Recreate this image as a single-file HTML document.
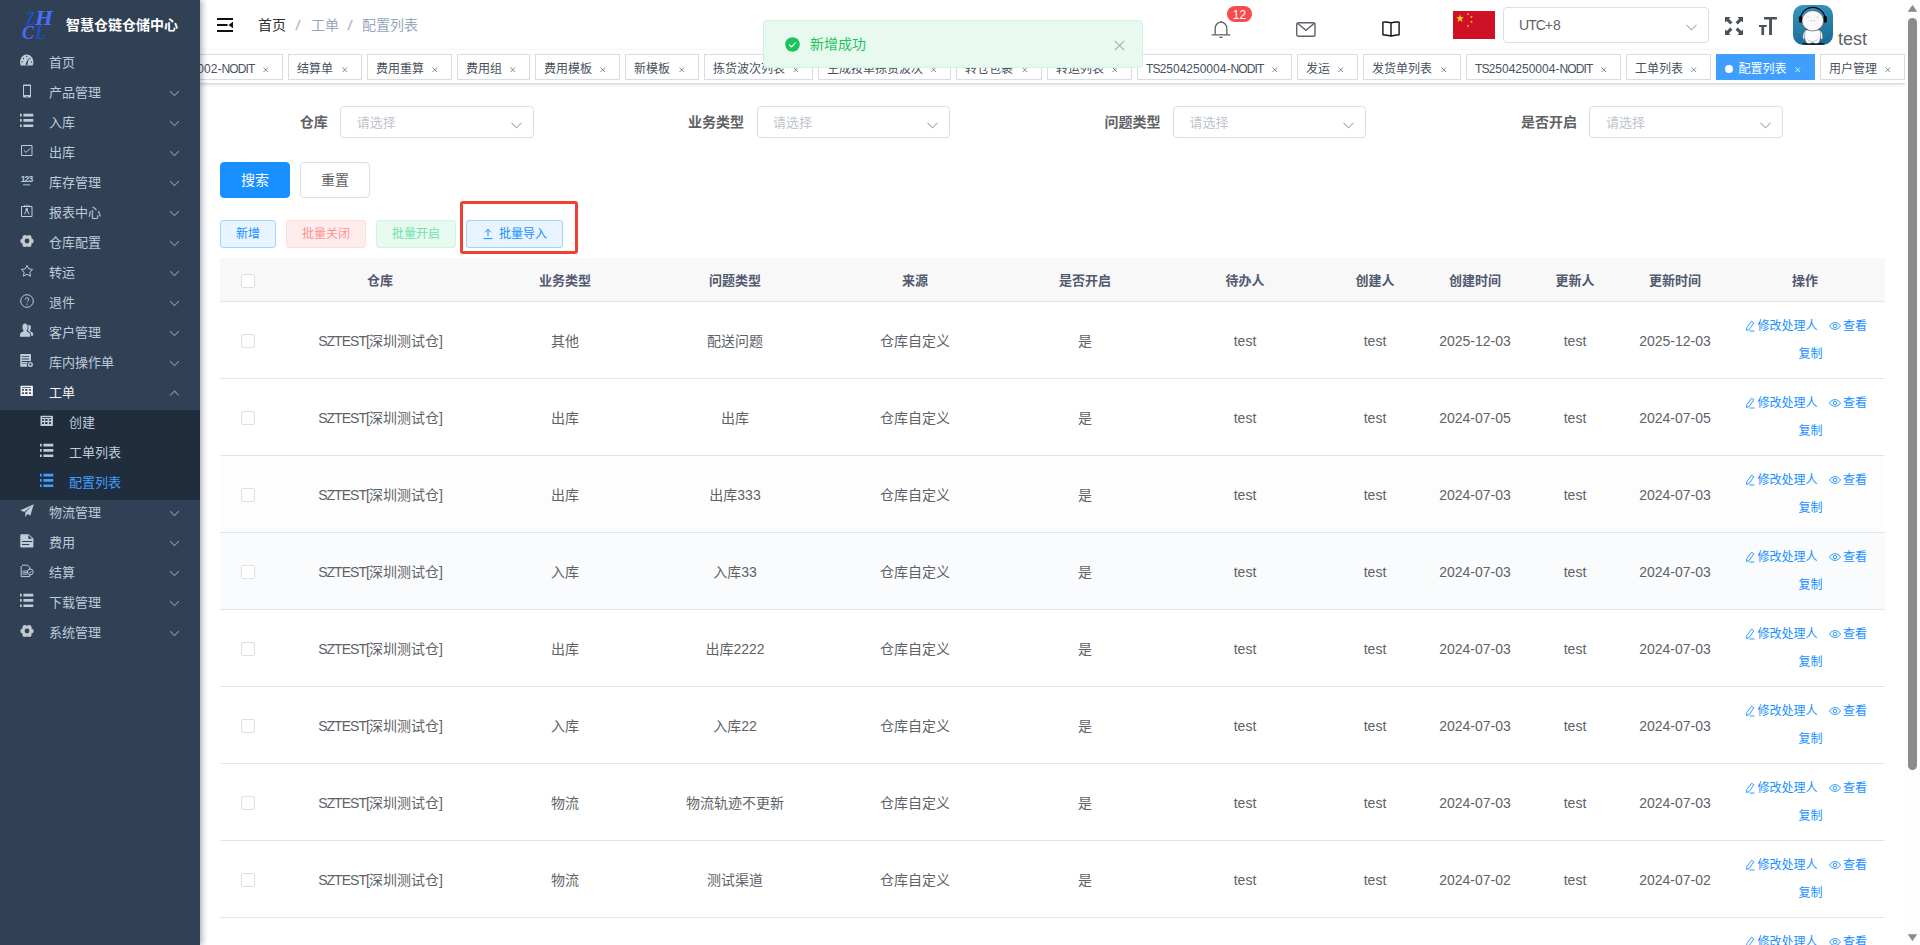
<!DOCTYPE html><html lang="zh-CN"><head><meta charset="utf-8"><title>配置列表</title><style>
*{box-sizing:border-box;margin:0;padding:0}
html,body{width:1920px;height:945px;overflow:hidden;background:#fff}
body{font-family:"Liberation Sans","Noto Sans CJK SC",sans-serif;font-size:14px;color:#606266;position:relative}
.abs{position:absolute}
#sb{position:absolute;left:0;top:0;width:200px;height:945px;background:#304156;z-index:20;box-shadow:2px 0 6px rgba(0,21,41,.35)}
#sub{position:absolute;left:0;top:410px;width:200px;height:90px;background:#1f2d3d}
.mi{position:absolute;left:0;width:200px;height:30px;color:#bfcbd9;font-size:13px;line-height:24px;white-space:nowrap}
.mi .tx{position:absolute;left:49px;top:1px}
.mi svg.ic{position:absolute;left:20px;top:4px;width:14px;height:14px;fill:currentColor;overflow:visible}
.mi.s .tx{left:69px}
.mi.s svg.ic{left:40px}
.mi svg.ar{position:absolute;left:168.500px;top:10px;width:11px;height:6.600px;fill:none;stroke:#8896a8;stroke-width:.95}
#nav{position:absolute;left:200px;top:0;width:1705px;height:50px;background:#fff}
#tags{position:absolute;left:200px;top:50px;width:1705px;height:34px;background:#fff;border-bottom:1px solid #d8dce5;box-shadow:0 1px 3px 0 rgba(0,0,0,.12),0 0 3px 0 rgba(0,0,0,.04);overflow:hidden}
.tag{position:absolute;top:4px;height:26px;border:1px solid #d8dce5;background:#fff;color:#495060;font-size:12px;line-height:28px;padding-left:8px;white-space:nowrap}
.cp{letter-spacing:-.07em}
.tag svg.x{position:absolute;right:13.500px;top:11.500px;width:5.500px;height:5.500px;stroke:#6b7280;stroke-width:.9;fill:none}
.tag.on{background:#409eff;border-color:#409eff;color:#fff}
.tag.on svg.x{stroke:#fff}
.tag.on i{display:inline-block;width:8px;height:8px;border-radius:50%;background:#fff;margin-right:5.500px;position:relative;top:0}
.lbl{position:absolute;top:106px;height:32px;line-height:32px;font-weight:700;font-size:14px;color:#606266;text-align:right;width:120px}
.sel{position:absolute;top:106px;height:32px;width:193.400px;border:1px solid #dcdfe6;border-radius:4px;background:#fff;font-size:13px;line-height:31px;color:#c0c4cc;padding-left:15.500px}
.sel svg,.tz svg{position:absolute;right:11px;top:14.500px;width:11px;height:7px;fill:none;stroke:#a8abb2;stroke-width:1.1}
.btn{position:absolute;text-align:center;border-radius:4px;border:1px solid;white-space:nowrap}
.th{position:absolute;top:0;height:43px;line-height:45px;text-align:center;font-weight:700;font-size:13px;color:#515a6e}
.row{position:absolute;left:220px;width:1665px;height:77px;border-bottom:1px solid #dfe6ec}
.c{position:absolute;top:0;height:76px;line-height:79px;text-align:center;font-size:14px;color:#606266;white-space:nowrap}
.cb{position:absolute;left:21px;width:14px;height:14px;border:1px solid #dcdfe6;border-radius:2px;background:#fff}
.lk{position:absolute;font-size:12px;line-height:16px;color:#1890ff;white-space:nowrap}
.lk svg{position:absolute;left:-14px;top:2px;width:12px;height:12px}
</style></head><body>
<div id="sb">
<div class="abs" style="left:21px;top:3px;width:40px;height:40px;font-family:'Liberation Serif',serif;font-style:italic;font-weight:700;line-height:1"><span class="abs" style="left:4.500px;top:6px;font-size:19px;color:#1f4fc0;transform:scaleX(.78);transform-origin:0 0">Z</span><span class="abs" style="left:13.500px;top:5px;font-size:21px;color:#4a6cff;transform:scaleX(1.1);transform-origin:0 0">H</span><span class="abs" style="left:1px;top:21px;font-size:18px;color:#4a6cff">C</span><span class="abs" style="left:14px;top:21px;font-size:18px;color:#1f4fc0">L</span></div>
<div class="abs" style="left:66px;top:13px;font-size:14px;font-weight:700;color:#fff;line-height:24px;white-space:nowrap">智慧仓链仓储中心</div>
<div id="sub"></div>
<div class="mi" style="top:50px;"><svg class="ic" viewBox="0 0 14 14"><path transform="translate(0,-1.700) scale(.96,1.090)" d="M7 2a7 7 0 0 0-7 7c0 1.1.3 2.2.8 3.1h12.4c.5-.9.8-2 .8-3.1a7 7 0 0 0-7-7zm0 1.2a.7.7 0 1 1 0 1.4.7.7 0 0 1 0-1.4zM2.2 9.7a.7.7 0 1 1 0-1.4.7.7 0 0 1 0 1.4zm1.4-3.4a.7.7 0 1 1 0-1.4.7.7 0 0 1 0 1.4zm4.3 4.300a1 1 0 1 1-1.7-.6L8.600 5.600l.6.3-1.3 4.7zM10.400 6.300a.7.7 0 1 1 0-1.4.7.7 0 0 1 0 1.4zm1.400 3.400a.7.7 0 1 1 0-1.4.7.7 0 0 1 0 1.4z"/></svg><span class="tx">首页</span></div>
<div class="mi" style="top:80px;"><svg class="ic" viewBox="0 0 14 14"><path d="M3.800 0.500h6.400c.5 0 .8.300.8.800v11.400c0 .5-.3.800-.8.800H3.800c-.5 0-.8-.3-.8-.8V1.300c0-.5.3-.8.8-.8zm.2 1.500v9h6V2H4zm2.300 10v.7h1.400V12H6.300z" fill-rule="evenodd"/></svg><span class="tx">产品管理</span><svg class="ar" viewBox="0 0 10 6"><path d="M1 1l4 4 4-4"/></svg></div>
<div class="mi" style="top:110px;"><svg class="ic" viewBox="0 0 14 14"><path d="M0 -.3h1.700v2.700H0zM3.400 -.3H13.300v2.700H3.400zM0 5h1.700v2.700H0zM3.400 5H13.300v2.700H3.400zM0 10.400h1.700v2.700H0zM3.400 10.400H13.300v2.700H3.400z"/></svg><span class="tx">入库</span><svg class="ar" viewBox="0 0 10 6"><path d="M1 1l4 4 4-4"/></svg></div>
<div class="mi" style="top:140px;"><svg class="ic" viewBox="0 0 14 14"><path d="M1.500 1.500h10.500v10h-10.500z" fill="none" stroke="currentColor" stroke-width="1" stroke-linejoin="round"/><path d="M3.800 6.200l2.400 2.300 4-4.200" fill="none" stroke="currentColor" stroke-width="1"/></svg><span class="tx">出库</span><svg class="ar" viewBox="0 0 10 6"><path d="M1 1l4 4 4-4"/></svg></div>
<div class="mi" style="top:170px;"><svg class="ic" viewBox="0 0 14 14"><text x="6.500" y="7.600" font-size="8.500" font-weight="700" text-anchor="middle" font-family="Liberation Sans,sans-serif" letter-spacing="-0.9" transform="scale(1,1.050)">123</text><path d="M3 10.400h7.300v.9h-7.300z"/></svg><span class="tx">库存管理</span><svg class="ar" viewBox="0 0 10 6"><path d="M1 1l4 4 4-4"/></svg></div>
<div class="mi" style="top:200px;"><svg class="ic" viewBox="0 0 14 14"><path d="M1.500 2.500h10.500v10h-10.500z" fill="none" stroke="currentColor" stroke-width="1"/><path d="M4.600 1v2.200M6.800 .6v2.200M9 1v2.200M6.800 5.500L4.500 10.300M6.800 5.500L9.100 10.300" fill="none" stroke="currentColor" stroke-width="1"/><circle cx="6.800" cy="5.300" r="1.200"/></svg><span class="tx">报表中心</span><svg class="ar" viewBox="0 0 10 6"><path d="M1 1l4 4 4-4"/></svg></div>
<div class="mi" style="top:230px;"><svg class="ic" viewBox="0 0 14 14"><g fill="#c6c9cc"><circle cx="11.10" cy="7.00" r="2.500"/><circle cx="9.05" cy="10.55" r="2.500"/><circle cx="4.95" cy="10.55" r="2.500"/><circle cx="2.90" cy="7.00" r="2.500"/><circle cx="4.95" cy="3.45" r="2.500"/><circle cx="9.05" cy="3.45" r="2.500"/><circle cx="7" cy="7" r="4.800"/></g><circle cx="7" cy="7" r="2.400" fill="#304156"/></svg><span class="tx">仓库配置</span><svg class="ar" viewBox="0 0 10 6"><path d="M1 1l4 4 4-4"/></svg></div>
<div class="mi" style="top:260px;"><svg class="ic" viewBox="0 0 14 14"><path d="M7 1.300l1.750 3.600 3.950.55-2.850 2.800.68 3.950L7 10.300l-3.530 1.900.68-3.950L1.300 5.450l3.950-.55z" fill="none" stroke="currentColor" stroke-width="1" stroke-linejoin="round"/></svg><span class="tx">转运</span><svg class="ar" viewBox="0 0 10 6"><path d="M1 1l4 4 4-4"/></svg></div>
<div class="mi" style="top:290px;"><svg class="ic" viewBox="0 0 14 14"><circle cx="7" cy="7" r="6.300" fill="none" stroke="currentColor" stroke-width="1"/><path d="M5.200 5.600a1.800 1.800 0 1 1 2.600 1.600c-.5.300-.8.600-.8 1.200" fill="none" stroke="currentColor" stroke-width="1"/><circle cx="7" cy="10.200" r=".65"/></svg><span class="tx">退件</span><svg class="ar" viewBox="0 0 10 6"><path d="M1 1l4 4 4-4"/></svg></div>
<div class="mi" style="top:320px;"><svg class="ic" viewBox="0 0 14 14"><g transform="translate(0,-1.300) scale(.94,1.140)"><path d="M5.300 0.800c1.700 0 2.900 1.300 2.900 3.100 0 1.200-.5 2.400-1.300 3 .2.700.8.900 2 1.400 1.300.5 1.900 1.100 1.900 2.300v1.700H0v-1.700c0-1.200.6-1.800 1.900-2.300 1.200-.5 1.800-.7 2-1.400-.8-.6-1.300-1.800-1.300-3C2.600 2.100 3.600.8 5.300.8z"/><path d="M9.300 1.900c1.400 0 2.300 1 2.300 2.500 0 1-.4 1.900-1 2.400.1.600.6.800 1.600 1.200 1.100.4 1.800 1 1.800 2v1.500h-2.300v-1c0-1.300-.7-2.200-2.200-2.800-.6-.2-1-.4-1.300-.6.500-.8.800-1.800.8-2.800 0-.7-.1-1.300-.4-1.900.2-.3.500-.5.700-.5z"/></svg><span class="tx">客户管理</span><svg class="ar" viewBox="0 0 10 6"><path d="M1 1l4 4 4-4"/></svg></div>
<div class="mi" style="top:350px;"><svg class="ic" viewBox="0 0 14 14"><path d="M.8 0h9.700q.5 0 .5.500V12.200q0 .5-.5.500H.8q-.5 0-.5-.5V.5q0-.5.5-.5zM1.7 2.2H9V3.1H1.7zM1.7 4.6H9V5.5H1.7zM1.7 7H9V7.9H1.7zM1.7 9.4H6.5V10.1H1.7z" fill-rule="evenodd"/><circle cx="10.400" cy="10.400" r="3.500" fill="#304156"/><circle cx="10.400" cy="10.400" r="2.500"/><circle cx="10.400" cy="10.400" r="1.100" fill="#304156"/></svg><span class="tx">库内操作单</span><svg class="ar" viewBox="0 0 10 6"><path d="M1 1l4 4 4-4"/></svg></div>
<div class="mi" style="top:380px;color:#f4f4f5"><svg class="ic" viewBox="0 0 14 14"><path d="M1.100 1.700H12.300Q12.900 1.700 12.900 2.300V11.500Q12.900 12.100 12.300 12.100H1.100Q.500 12.100 .500 11.500V2.300Q.500 1.700 1.100 1.700zM2.05 3.25H10.9V3.95H2.05zM2.1 5.1H3.9V6.8H2.1zM5.1 5.1H7.5V6.8H5.1zM9.1 5.1H10.9V6.8H9.1zM2.1 8.2H3.9V9.9H2.1zM5.1 8.2H7.5V9.9H5.1zM9.1 8.2H10.9V9.9H9.1z" fill-rule="evenodd"/></svg><span class="tx">工单</span><svg class="ar" viewBox="0 0 10 6"><path d="M1 5l4-4 4 4"/></svg></div>
<div class="mi s" style="top:410px;"><svg class="ic" viewBox="0 0 14 14"><path d="M1.100 1.700H12.300Q12.900 1.700 12.900 2.300V11.500Q12.900 12.100 12.300 12.100H1.100Q.500 12.100 .500 11.500V2.300Q.500 1.700 1.100 1.700zM2.05 3.25H10.9V3.95H2.05zM2.1 5.1H3.9V6.8H2.1zM5.1 5.1H7.5V6.8H5.1zM9.1 5.1H10.9V6.8H9.1zM2.1 8.2H3.9V9.9H2.1zM5.1 8.2H7.5V9.9H5.1zM9.1 8.2H10.9V9.9H9.1z" fill-rule="evenodd"/></svg><span class="tx">创建</span></div>
<div class="mi s" style="top:440px;"><svg class="ic" viewBox="0 0 14 14"><path d="M0 -.3h1.700v2.700H0zM3.400 -.3H13.300v2.700H3.400zM0 5h1.700v2.700H0zM3.400 5H13.300v2.700H3.400zM0 10.400h1.700v2.700H0zM3.400 10.400H13.300v2.700H3.400z"/></svg><span class="tx">工单列表</span></div>
<div class="mi s" style="top:470px;color:#409eff"><svg class="ic" viewBox="0 0 14 14"><path d="M0 -.3h1.700v2.700H0zM3.400 -.3H13.300v2.700H3.400zM0 5h1.700v2.700H0zM3.400 5H13.300v2.700H3.400zM0 10.400h1.700v2.700H0zM3.400 10.400H13.300v2.700H3.400z"/></svg><span class="tx">配置列表</span></div>
<div class="mi" style="top:500px;"><svg class="ic" viewBox="0 0 14 14"><path d="M13.800.3L.3 6.300l3.900 1.600L11.500 2.300 5.300 8.600v4.300l2.200-2.900 2.900 1.600z"/></svg><span class="tx">物流管理</span><svg class="ar" viewBox="0 0 10 6"><path d="M1 1l4 4 4-4"/></svg></div>
<div class="mi" style="top:530px;"><svg class="ic" viewBox="0 0 14 14"><path d="M1.300.300h7.400l4.700 4.200v8c0 .6-.4 1-1 1H1.300c-.6 0-1-.4-1-1v-11.200c0-.6.4-1 1-1zM8.300 1.100v3.600h4zM2 7.100v1h10.200v-1H2zm0 3v1h7.200v-1H2z" fill-rule="evenodd"/></svg><span class="tx">费用</span><svg class="ar" viewBox="0 0 10 6"><path d="M1 1l4 4 4-4"/></svg></div>
<div class="mi" style="top:560px;"><svg class="ic" viewBox="0 0 14 14"><path d="M2 1.200h5.500l2.300 2.200v2.300M9.800 10v2.600H1.200V2" fill="none" stroke="currentColor" stroke-width="1"/><path d="M2.500 7h4.500M2.500 8.600h4.500M2.500 10.200h4.500" fill="none" stroke="currentColor" stroke-width=".9"/><circle cx="10.300" cy="7.900" r="2.900" fill="none" stroke="currentColor" stroke-width="1"/><path d="M9 7.900l1 1 1.600-1.900" fill="none" stroke="currentColor" stroke-width=".9"/></svg><span class="tx">结算</span><svg class="ar" viewBox="0 0 10 6"><path d="M1 1l4 4 4-4"/></svg></div>
<div class="mi" style="top:590px;"><svg class="ic" viewBox="0 0 14 14"><path d="M0 -.3h1.700v2.700H0zM3.400 -.3H13.300v2.700H3.400zM0 5h1.700v2.700H0zM3.400 5H13.300v2.700H3.400zM0 10.400h1.700v2.700H0zM3.400 10.400H13.300v2.700H3.400z"/></svg><span class="tx">下载管理</span><svg class="ar" viewBox="0 0 10 6"><path d="M1 1l4 4 4-4"/></svg></div>
<div class="mi" style="top:620px;"><svg class="ic" viewBox="0 0 14 14"><g fill="#c6c9cc"><circle cx="11.10" cy="7.00" r="2.500"/><circle cx="9.05" cy="10.55" r="2.500"/><circle cx="4.95" cy="10.55" r="2.500"/><circle cx="2.90" cy="7.00" r="2.500"/><circle cx="4.95" cy="3.45" r="2.500"/><circle cx="9.05" cy="3.45" r="2.500"/><circle cx="7" cy="7" r="4.800"/></g><circle cx="7" cy="7" r="2.400" fill="#304156"/></svg><span class="tx">系统管理</span><svg class="ar" viewBox="0 0 10 6"><path d="M1 1l4 4 4-4"/></svg></div>
</div>
<div id="nav">
<svg class="abs" style="left:17px;top:18px;width:16px;height:14px" viewBox="0 0 16 14"><path d="M0 0h16v2H0zM0 6h10.500v2H0zM0 12h16v2H0zM16 3.800v6.400L11.500 7z" fill="#111"/></svg>
<div class="abs" style="left:58px;top:13px;font-size:14px;line-height:24px;white-space:nowrap;color:#97a8be"><span style="color:#303133">首页</span><span class="abs" style="left:37.500px;color:#b8c0cc;font-weight:700;transform:skewX(-12deg)">/</span><span class="abs" style="left:53px">工单</span><span class="abs" style="left:90px;color:#b8c0cc;font-weight:700;transform:skewX(-12deg)">/</span><span class="abs" style="left:104px">配置列表</span></div>
<svg class="abs" style="left:1011px;top:20px;width:20px;height:19px" viewBox="0 0 20 19"><path d="M4.200 14.800V8.300c0-3.500 2.500-6.100 5.800-6.100s5.800 2.600 5.800 6.100v6.500" fill="none" stroke="#5d6169" stroke-width="1.300"/><path d="M1.200 14.900h17.600" stroke="#5d6169" stroke-width="1.300" stroke-linecap="round"/><path d="M8.800 17.400h2.400" stroke="#5d6169" stroke-width="1.100" stroke-linecap="round"/><circle cx="10" cy="1.700" r=".8" fill="#5d6169"/></svg>
<div class="abs" style="left:1027px;top:6px;width:25px;height:16px;border-radius:8px;background:#f74c4f;color:#fff;font-size:12px;line-height:19px;text-align:center">12</div>
<svg class="abs" style="left:1096px;top:22px;width:20px;height:15px" viewBox="0 0 20 15"><rect x=".7" y=".7" width="18.300" height="13.600" rx="1.800" fill="none" stroke="#5d6169" stroke-width="1.400"/><path d="M1.500 1.200l8.400 7.200 8.400-7.200" fill="none" stroke="#5d6169" stroke-width="1.400"/></svg>
<svg class="abs" style="left:1182px;top:21px;width:18px;height:16px" viewBox="0 0 18 16"><path d="M.9 1.100Q5 .600 9 1.900 13 .600 17.100 1.100V13.700Q13 13.800 9 15.100 5 13.800.9 13.700zM9 1.900V15.100" fill="none" stroke="#111" stroke-width="1.400" stroke-linejoin="round"/></svg>
<svg class="abs" style="left:1253px;top:11px;width:42px;height:28px" viewBox="0 0 42 28"><rect width="42" height="28" fill="#ce1126"/><g fill="#fcd116"><path d="M7.00 3.40L7.99 6.24L10.99 6.30L8.60 8.12L9.47 11.00L7.00 9.28L4.53 11.00L5.40 8.12L3.01 6.30L6.01 6.24z"/><path d="M15.65 1.70L15.45 2.76L16.37 3.31L15.30 3.45L15.06 4.49L14.60 3.52L13.53 3.61L14.31 2.88L13.90 1.89L14.84 2.40z"/><path d="M18.76 4.42L18.93 5.48L19.99 5.69L19.03 6.18L19.16 7.25L18.40 6.49L17.42 6.94L17.91 5.98L17.18 5.20L18.24 5.36z"/><path d="M18.24 9.52L18.76 10.46L19.82 10.30L19.09 11.08L19.58 12.04L18.60 11.59L17.84 12.35L17.97 11.28L17.01 10.79L18.07 10.58z"/><path d="M14.15 13.60L14.96 14.30L15.90 13.79L15.49 14.78L16.27 15.51L15.20 15.42L14.74 16.39L14.50 15.35L13.43 15.21L14.35 14.66z"/></g></svg>
<div class="abs tz" style="left:1303px;top:7px;width:206px;height:36px;border:1px solid #dcdfe6;border-radius:4px;font-size:14px;line-height:34px;padding-left:15px;color:#606266"><span class="cp">UTC</span>+8<svg viewBox="0 0 11 7" style="top:16px;right:11px"><path d="M.5.800l5 5 5-5"/></svg></div>
<svg class="abs" style="left:1525px;top:17px;width:18px;height:18px" viewBox="0 0 18 18" fill="#4a505c"><path d="M0 0h5.600L3.900 1.700l3.500 3.500-2.200 2.200-3.500-3.500L0 5.600zM18 0v5.600l-1.700-1.700-3.500 3.500-2.200-2.200 3.500-3.500L12.400 0zM0 18v-5.600l1.700 1.700 3.500-3.500 2.200 2.200-3.500 3.500L5.600 18zM18 18h-5.600l1.700-1.700-3.500-3.500 2.200-2.200 3.500 3.500L18 12.400z"/></svg>
<svg class="abs" style="left:1559px;top:17px;width:18px;height:18px" viewBox="0 0 18 18" fill="#4a505c"><path d="M5.100 0h12.800v2.600H13V18h-2.900V2.600H5.100zM0 7.900h7.700V10H5.100v8H2.400v-8H0z"/></svg>
<svg class="abs" style="left:1593px;top:5px;width:40px;height:40px" viewBox="0 0 40 40"><defs><linearGradient id="ag" x1="0" y1="0" x2="0.200" y2="1"><stop offset="0" stop-color="#3896bf"/><stop offset="1" stop-color="#1a6f99"/></linearGradient></defs><rect width="40" height="40" rx="10" fill="url(#ag)"/><ellipse cx="20.500" cy="38.700" rx="11.500" ry="1.100" fill="#06141c"/><path d="M7.200 15.500a12.600 13.200 0 0 1 25.200 0" fill="none" stroke="#0a0a0a" stroke-width="1.300"/><rect x="5.800" y="11" width="3.600" height="6.800" rx="1.700" fill="#0a0a0a"/><rect x="30.300" y="11" width="3.600" height="6.800" rx="1.700" fill="#0a0a0a"/><path d="M12 25.500c-1.800 1.500-2.600 5.500-2 8.200.3 1 1.500 1 1.900 0l1.600-6zM27.600 25.500c1.800 1.500 2.600 5.500 2 8.200-.3 1-1.500 1-1.900 0l-1.600-6z" fill="#fafafa" stroke="#333" stroke-width=".4"/><path d="M12.300 25c-1 4.500-.8 9 .6 12.500 1.600 1.300 4.700 1.400 6.700.3 2 1.100 5.100 1 6.700-.3 1.400-3.500 1.600-8 .6-12.500z" fill="#fcfcfc" stroke="#333" stroke-width=".4"/><ellipse cx="19.800" cy="15.800" rx="10.800" ry="10.200" fill="#f9f9f9" stroke="#222" stroke-width=".5"/><path d="M13.300 12.600q1.500-1.500 3.200 0M22.600 12.600q1.500-1.500 3.200 0" stroke="#aaa" stroke-width=".5" fill="none"/><path d="M17.300 15.600h1.700M20.300 15.600h1.700" stroke="#999" stroke-width=".6"/><path d="M14.500 34.300c1.500 1.500 3.500 2 5.100 2.300 1.600-.3 3.600-.8 5.100-2.300M19.600 36.600v1.500" stroke="#777" stroke-width=".4" fill="none"/></svg>
<div class="abs" style="left:1638px;top:27px;font-size:18px;line-height:24px;color:#606266">test</div>
</div>
<div id="tags">
<div class="tag" style="left:-72px;width:155px"><span class="cp">TS</span>2504250002-<span class="cp">NODIT</span><svg class="x" viewBox="0 0 6 6"><path d="M.5.500l5 5M5.500.5l-5 5"/></svg></div>
<div class="tag" style="left:88px;width:74px">结算单<svg class="x" viewBox="0 0 6 6"><path d="M.5.500l5 5M5.500.5l-5 5"/></svg></div>
<div class="tag" style="left:167px;width:85px">费用重算<svg class="x" viewBox="0 0 6 6"><path d="M.5.500l5 5M5.500.5l-5 5"/></svg></div>
<div class="tag" style="left:257px;width:73px">费用组<svg class="x" viewBox="0 0 6 6"><path d="M.5.500l5 5M5.500.5l-5 5"/></svg></div>
<div class="tag" style="left:335px;width:85px">费用模板<svg class="x" viewBox="0 0 6 6"><path d="M.5.500l5 5M5.500.5l-5 5"/></svg></div>
<div class="tag" style="left:425px;width:74px">新模板<svg class="x" viewBox="0 0 6 6"><path d="M.5.500l5 5M5.500.5l-5 5"/></svg></div>
<div class="tag" style="left:504px;width:109px">拣货波次列表<svg class="x" viewBox="0 0 6 6"><path d="M.5.500l5 5M5.500.5l-5 5"/></svg></div>
<div class="tag" style="left:618px;width:133px">生成按单拣货波次<svg class="x" viewBox="0 0 6 6"><path d="M.5.500l5 5M5.500.5l-5 5"/></svg></div>
<div class="tag" style="left:756px;width:86px">转仓包裹<svg class="x" viewBox="0 0 6 6"><path d="M.5.500l5 5M5.500.5l-5 5"/></svg></div>
<div class="tag" style="left:847px;width:85px">转运列表<svg class="x" viewBox="0 0 6 6"><path d="M.5.500l5 5M5.500.5l-5 5"/></svg></div>
<div class="tag" style="left:937px;width:155px"><span class="cp">TS</span>2504250004-<span class="cp">NODIT</span><svg class="x" viewBox="0 0 6 6"><path d="M.5.500l5 5M5.500.5l-5 5"/></svg></div>
<div class="tag" style="left:1097px;width:61px">发运<svg class="x" viewBox="0 0 6 6"><path d="M.5.500l5 5M5.500.5l-5 5"/></svg></div>
<div class="tag" style="left:1163px;width:98px">发货单列表<svg class="x" viewBox="0 0 6 6"><path d="M.5.500l5 5M5.500.5l-5 5"/></svg></div>
<div class="tag" style="left:1266px;width:155px"><span class="cp">TS</span>2504250004-<span class="cp">NODIT</span><svg class="x" viewBox="0 0 6 6"><path d="M.5.500l5 5M5.500.5l-5 5"/></svg></div>
<div class="tag" style="left:1426px;width:85px">工单列表<svg class="x" viewBox="0 0 6 6"><path d="M.5.500l5 5M5.500.5l-5 5"/></svg></div>
<div class="tag on" style="left:1516px;width:99px"><i></i>配置列表<svg class="x" viewBox="0 0 6 6"><path d="M.5.500l5 5M5.500.5l-5 5"/></svg></div>
<div class="tag" style="left:1620px;width:85px">用户管理<svg class="x" viewBox="0 0 6 6"><path d="M.5.500l5 5M5.500.5l-5 5"/></svg></div>
</div>
<div class="abs" style="left:763px;top:20px;width:380px;height:48px;background:#e8f9ef;border:1px solid #d0f3de;border-radius:4px;z-index:30"><svg class="abs" style="left:20.500px;top:16px;width:15px;height:15px" viewBox="0 0 15 15"><circle cx="7.500" cy="7.500" r="7.300" fill="#1ac45d"/><path d="M4.300 7.800l2.200 2.100 4.200-4.300" fill="none" stroke="#fff" stroke-width="1.200"/></svg><div class="abs" style="left:46px;top:11px;font-size:14px;line-height:24px;color:#1dc45e;white-space:nowrap">新增成功</div><svg class="abs" style="left:350px;top:18.500px;width:11px;height:11px" viewBox="0 0 11 11"><path d="M.8.800l9.400 9.400M10.200.8L.8 10.200" stroke="#a8abb2" stroke-width="1.100"/></svg></div>
<div class="lbl" style="left:207.7px">仓库</div>
<div class="sel" style="left:340.2px">请选择<svg viewBox="0 0 11 7"><path d="M.5.800l5 5 5-5"/></svg></div>
<div class="lbl" style="left:624.1px">业务类型</div>
<div class="sel" style="left:756.6px">请选择<svg viewBox="0 0 11 7"><path d="M.5.800l5 5 5-5"/></svg></div>
<div class="lbl" style="left:1040.5px">问题类型</div>
<div class="sel" style="left:1173.0px">请选择<svg viewBox="0 0 11 7"><path d="M.5.800l5 5 5-5"/></svg></div>
<div class="lbl" style="left:1456.9px">是否开启</div>
<div class="sel" style="left:1589.4px">请选择<svg viewBox="0 0 11 7"><path d="M.5.800l5 5 5-5"/></svg></div>
<div class="btn" style="left:220px;top:162px;width:70px;height:36px;line-height:34px;background:#1890ff;border-color:#1890ff;color:#fff;font-size:14px">搜索</div>
<div class="btn" style="left:300px;top:162px;width:70px;height:36px;line-height:34px;background:#fff;border-color:#dcdfe6;color:#606266;font-size:14px">重置</div>
<div class="btn" style="left:220px;top:220px;width:56px;height:28px;line-height:27.500px;background:#e8f4ff;border-color:#a3d3ff;color:#1890ff;font-size:12px;border-radius:3px">新增</div>
<div class="btn" style="left:286px;top:220px;width:80px;height:28px;line-height:27.500px;background:#ffeded;border-color:#ffdbdb;color:#ff9292;font-size:12px;border-radius:3px">批量关闭</div>
<div class="btn" style="left:376px;top:220px;width:80px;height:28px;line-height:27.500px;background:#e7faf0;border-color:#d0f5e0;color:#71e2a3;font-size:12px;border-radius:3px">批量开启</div>
<div class="btn" style="left:466px;top:220px;width:97px;height:28px;line-height:27.500px;background:#e8f4ff;border-color:#a3d3ff;color:#1890ff;font-size:12px;border-radius:3px;padding-left:17px">批量导入<svg class="abs" style="left:15.300px;top:7px;width:12px;height:12px" viewBox="0 0 12 12"><path d="M6 1.500v7M3 4.300l3-3 3 3M1.500 10.600h9" fill="none" stroke="#1890ff" stroke-width="1"/></svg></div>
<div class="abs" style="left:460px;top:201px;width:118px;height:53px;border:3px solid #ee4134;border-radius:3px"></div>
<div class="abs" style="left:220px;top:258px;width:1665px;height:44px;background:#f8f8f9;border-bottom:1px solid #dfe6ec">
<div class="cb" style="top:16px"></div>
<div class="th" style="left:55px;width:210px">仓库</div>
<div class="th" style="left:265px;width:160px">业务类型</div>
<div class="th" style="left:425px;width:180px">问题类型</div>
<div class="th" style="left:605px;width:180px">来源</div>
<div class="th" style="left:785px;width:160px">是否开启</div>
<div class="th" style="left:945px;width:160px">待办人</div>
<div class="th" style="left:1105px;width:100px">创建人</div>
<div class="th" style="left:1205px;width:100px">创建时间</div>
<div class="th" style="left:1305px;width:100px">更新人</div>
<div class="th" style="left:1405px;width:100px">更新时间</div>
<div class="th" style="left:1505px;width:160px">操作</div>
</div>
<div class="row" style="top:302px;">
<div class="cb" style="top:32px"></div>
<div class="c" style="left:55px;width:210px"><span class="cp">SZTEST[</span>深圳测试仓<span class="cp">]</span></div>
<div class="c" style="left:265px;width:160px">其他</div>
<div class="c" style="left:425px;width:180px">配送问题</div>
<div class="c" style="left:605px;width:180px">仓库自定义</div>
<div class="c" style="left:785px;width:160px">是</div>
<div class="c" style="left:945px;width:160px">test</div>
<div class="c" style="left:1105px;width:100px">test</div>
<div class="c" style="left:1205px;width:100px">2025-12-03</div>
<div class="c" style="left:1305px;width:100px">test</div>
<div class="c" style="left:1405px;width:100px">2025-12-03</div>
<div class="lk" style="left:1537.500px;top:16px"><svg viewBox="0 0 12 12"><path d="M7.600 1.200l2.200 1.600-4.600 6.700-2.700 1 .3-2.800z" fill="none" stroke="#1890ff" stroke-width=".9"/><path d="M5.500 11h5" stroke="#1890ff" stroke-width=".9"/></svg>修改处理人</div>
<div class="lk" style="left:1623px;top:16px"><svg viewBox="0 0 12 12"><path d="M.5 6C2 3.600 4 2.600 6 2.600S10 3.600 11.500 6C10 8.400 8 9.400 6 9.400S2 8.400.5 6z" fill="none" stroke="#1890ff" stroke-width=".9"/><circle cx="6" cy="6" r="1.800" fill="none" stroke="#1890ff" stroke-width=".9"/></svg>查看</div>
<div class="lk" style="left:1578.500px;top:44px">复制</div>
</div>
<div class="row" style="top:379px;">
<div class="cb" style="top:32px"></div>
<div class="c" style="left:55px;width:210px"><span class="cp">SZTEST[</span>深圳测试仓<span class="cp">]</span></div>
<div class="c" style="left:265px;width:160px">出库</div>
<div class="c" style="left:425px;width:180px">出库</div>
<div class="c" style="left:605px;width:180px">仓库自定义</div>
<div class="c" style="left:785px;width:160px">是</div>
<div class="c" style="left:945px;width:160px">test</div>
<div class="c" style="left:1105px;width:100px">test</div>
<div class="c" style="left:1205px;width:100px">2024-07-05</div>
<div class="c" style="left:1305px;width:100px">test</div>
<div class="c" style="left:1405px;width:100px">2024-07-05</div>
<div class="lk" style="left:1537.500px;top:16px"><svg viewBox="0 0 12 12"><path d="M7.600 1.200l2.200 1.600-4.600 6.700-2.700 1 .3-2.800z" fill="none" stroke="#1890ff" stroke-width=".9"/><path d="M5.500 11h5" stroke="#1890ff" stroke-width=".9"/></svg>修改处理人</div>
<div class="lk" style="left:1623px;top:16px"><svg viewBox="0 0 12 12"><path d="M.5 6C2 3.600 4 2.600 6 2.600S10 3.600 11.500 6C10 8.400 8 9.400 6 9.400S2 8.400.5 6z" fill="none" stroke="#1890ff" stroke-width=".9"/><circle cx="6" cy="6" r="1.800" fill="none" stroke="#1890ff" stroke-width=".9"/></svg>查看</div>
<div class="lk" style="left:1578.500px;top:44px">复制</div>
</div>
<div class="row" style="top:456px;background:#fdfdfe;">
<div class="cb" style="top:32px"></div>
<div class="c" style="left:55px;width:210px"><span class="cp">SZTEST[</span>深圳测试仓<span class="cp">]</span></div>
<div class="c" style="left:265px;width:160px">出库</div>
<div class="c" style="left:425px;width:180px">出库333</div>
<div class="c" style="left:605px;width:180px">仓库自定义</div>
<div class="c" style="left:785px;width:160px">是</div>
<div class="c" style="left:945px;width:160px">test</div>
<div class="c" style="left:1105px;width:100px">test</div>
<div class="c" style="left:1205px;width:100px">2024-07-03</div>
<div class="c" style="left:1305px;width:100px">test</div>
<div class="c" style="left:1405px;width:100px">2024-07-03</div>
<div class="lk" style="left:1537.500px;top:16px"><svg viewBox="0 0 12 12"><path d="M7.600 1.200l2.200 1.600-4.600 6.700-2.700 1 .3-2.800z" fill="none" stroke="#1890ff" stroke-width=".9"/><path d="M5.500 11h5" stroke="#1890ff" stroke-width=".9"/></svg>修改处理人</div>
<div class="lk" style="left:1623px;top:16px"><svg viewBox="0 0 12 12"><path d="M.5 6C2 3.600 4 2.600 6 2.600S10 3.600 11.500 6C10 8.400 8 9.400 6 9.400S2 8.400.5 6z" fill="none" stroke="#1890ff" stroke-width=".9"/><circle cx="6" cy="6" r="1.800" fill="none" stroke="#1890ff" stroke-width=".9"/></svg>查看</div>
<div class="lk" style="left:1578.500px;top:44px">复制</div>
</div>
<div class="row" style="top:533px;background:#fafbfd;">
<div class="cb" style="top:32px"></div>
<div class="c" style="left:55px;width:210px"><span class="cp">SZTEST[</span>深圳测试仓<span class="cp">]</span></div>
<div class="c" style="left:265px;width:160px">入库</div>
<div class="c" style="left:425px;width:180px">入库33</div>
<div class="c" style="left:605px;width:180px">仓库自定义</div>
<div class="c" style="left:785px;width:160px">是</div>
<div class="c" style="left:945px;width:160px">test</div>
<div class="c" style="left:1105px;width:100px">test</div>
<div class="c" style="left:1205px;width:100px">2024-07-03</div>
<div class="c" style="left:1305px;width:100px">test</div>
<div class="c" style="left:1405px;width:100px">2024-07-03</div>
<div class="lk" style="left:1537.500px;top:16px"><svg viewBox="0 0 12 12"><path d="M7.600 1.200l2.200 1.600-4.600 6.700-2.700 1 .3-2.800z" fill="none" stroke="#1890ff" stroke-width=".9"/><path d="M5.500 11h5" stroke="#1890ff" stroke-width=".9"/></svg>修改处理人</div>
<div class="lk" style="left:1623px;top:16px"><svg viewBox="0 0 12 12"><path d="M.5 6C2 3.600 4 2.600 6 2.600S10 3.600 11.500 6C10 8.400 8 9.400 6 9.400S2 8.400.5 6z" fill="none" stroke="#1890ff" stroke-width=".9"/><circle cx="6" cy="6" r="1.800" fill="none" stroke="#1890ff" stroke-width=".9"/></svg>查看</div>
<div class="lk" style="left:1578.500px;top:44px">复制</div>
</div>
<div class="row" style="top:610px;">
<div class="cb" style="top:32px"></div>
<div class="c" style="left:55px;width:210px"><span class="cp">SZTEST[</span>深圳测试仓<span class="cp">]</span></div>
<div class="c" style="left:265px;width:160px">出库</div>
<div class="c" style="left:425px;width:180px">出库2222</div>
<div class="c" style="left:605px;width:180px">仓库自定义</div>
<div class="c" style="left:785px;width:160px">是</div>
<div class="c" style="left:945px;width:160px">test</div>
<div class="c" style="left:1105px;width:100px">test</div>
<div class="c" style="left:1205px;width:100px">2024-07-03</div>
<div class="c" style="left:1305px;width:100px">test</div>
<div class="c" style="left:1405px;width:100px">2024-07-03</div>
<div class="lk" style="left:1537.500px;top:16px"><svg viewBox="0 0 12 12"><path d="M7.600 1.200l2.200 1.600-4.600 6.700-2.700 1 .3-2.800z" fill="none" stroke="#1890ff" stroke-width=".9"/><path d="M5.500 11h5" stroke="#1890ff" stroke-width=".9"/></svg>修改处理人</div>
<div class="lk" style="left:1623px;top:16px"><svg viewBox="0 0 12 12"><path d="M.5 6C2 3.600 4 2.600 6 2.600S10 3.600 11.500 6C10 8.400 8 9.400 6 9.400S2 8.400.5 6z" fill="none" stroke="#1890ff" stroke-width=".9"/><circle cx="6" cy="6" r="1.800" fill="none" stroke="#1890ff" stroke-width=".9"/></svg>查看</div>
<div class="lk" style="left:1578.500px;top:44px">复制</div>
</div>
<div class="row" style="top:687px;">
<div class="cb" style="top:32px"></div>
<div class="c" style="left:55px;width:210px"><span class="cp">SZTEST[</span>深圳测试仓<span class="cp">]</span></div>
<div class="c" style="left:265px;width:160px">入库</div>
<div class="c" style="left:425px;width:180px">入库22</div>
<div class="c" style="left:605px;width:180px">仓库自定义</div>
<div class="c" style="left:785px;width:160px">是</div>
<div class="c" style="left:945px;width:160px">test</div>
<div class="c" style="left:1105px;width:100px">test</div>
<div class="c" style="left:1205px;width:100px">2024-07-03</div>
<div class="c" style="left:1305px;width:100px">test</div>
<div class="c" style="left:1405px;width:100px">2024-07-03</div>
<div class="lk" style="left:1537.500px;top:16px"><svg viewBox="0 0 12 12"><path d="M7.600 1.200l2.200 1.600-4.600 6.700-2.700 1 .3-2.800z" fill="none" stroke="#1890ff" stroke-width=".9"/><path d="M5.500 11h5" stroke="#1890ff" stroke-width=".9"/></svg>修改处理人</div>
<div class="lk" style="left:1623px;top:16px"><svg viewBox="0 0 12 12"><path d="M.5 6C2 3.600 4 2.600 6 2.600S10 3.600 11.500 6C10 8.400 8 9.400 6 9.400S2 8.400.5 6z" fill="none" stroke="#1890ff" stroke-width=".9"/><circle cx="6" cy="6" r="1.800" fill="none" stroke="#1890ff" stroke-width=".9"/></svg>查看</div>
<div class="lk" style="left:1578.500px;top:44px">复制</div>
</div>
<div class="row" style="top:764px;">
<div class="cb" style="top:32px"></div>
<div class="c" style="left:55px;width:210px"><span class="cp">SZTEST[</span>深圳测试仓<span class="cp">]</span></div>
<div class="c" style="left:265px;width:160px">物流</div>
<div class="c" style="left:425px;width:180px">物流轨迹不更新</div>
<div class="c" style="left:605px;width:180px">仓库自定义</div>
<div class="c" style="left:785px;width:160px">是</div>
<div class="c" style="left:945px;width:160px">test</div>
<div class="c" style="left:1105px;width:100px">test</div>
<div class="c" style="left:1205px;width:100px">2024-07-03</div>
<div class="c" style="left:1305px;width:100px">test</div>
<div class="c" style="left:1405px;width:100px">2024-07-03</div>
<div class="lk" style="left:1537.500px;top:16px"><svg viewBox="0 0 12 12"><path d="M7.600 1.200l2.200 1.600-4.600 6.700-2.700 1 .3-2.800z" fill="none" stroke="#1890ff" stroke-width=".9"/><path d="M5.500 11h5" stroke="#1890ff" stroke-width=".9"/></svg>修改处理人</div>
<div class="lk" style="left:1623px;top:16px"><svg viewBox="0 0 12 12"><path d="M.5 6C2 3.600 4 2.600 6 2.600S10 3.600 11.500 6C10 8.400 8 9.400 6 9.400S2 8.400.5 6z" fill="none" stroke="#1890ff" stroke-width=".9"/><circle cx="6" cy="6" r="1.800" fill="none" stroke="#1890ff" stroke-width=".9"/></svg>查看</div>
<div class="lk" style="left:1578.500px;top:44px">复制</div>
</div>
<div class="row" style="top:841px;">
<div class="cb" style="top:32px"></div>
<div class="c" style="left:55px;width:210px"><span class="cp">SZTEST[</span>深圳测试仓<span class="cp">]</span></div>
<div class="c" style="left:265px;width:160px">物流</div>
<div class="c" style="left:425px;width:180px">测试渠道</div>
<div class="c" style="left:605px;width:180px">仓库自定义</div>
<div class="c" style="left:785px;width:160px">是</div>
<div class="c" style="left:945px;width:160px">test</div>
<div class="c" style="left:1105px;width:100px">test</div>
<div class="c" style="left:1205px;width:100px">2024-07-02</div>
<div class="c" style="left:1305px;width:100px">test</div>
<div class="c" style="left:1405px;width:100px">2024-07-02</div>
<div class="lk" style="left:1537.500px;top:16px"><svg viewBox="0 0 12 12"><path d="M7.600 1.200l2.200 1.600-4.600 6.700-2.700 1 .3-2.800z" fill="none" stroke="#1890ff" stroke-width=".9"/><path d="M5.500 11h5" stroke="#1890ff" stroke-width=".9"/></svg>修改处理人</div>
<div class="lk" style="left:1623px;top:16px"><svg viewBox="0 0 12 12"><path d="M.5 6C2 3.600 4 2.600 6 2.600S10 3.600 11.500 6C10 8.400 8 9.400 6 9.400S2 8.400.5 6z" fill="none" stroke="#1890ff" stroke-width=".9"/><circle cx="6" cy="6" r="1.800" fill="none" stroke="#1890ff" stroke-width=".9"/></svg>查看</div>
<div class="lk" style="left:1578.500px;top:44px">复制</div>
</div>
<div class="row" style="top:918px;">
<div class="cb" style="top:32px"></div>
<div class="c" style="left:55px;width:210px"><span class="cp">SZTEST[</span>深圳测试仓<span class="cp">]</span></div>
<div class="c" style="left:265px;width:160px">物流</div>
<div class="c" style="left:425px;width:180px">测试渠道</div>
<div class="c" style="left:605px;width:180px">仓库自定义</div>
<div class="c" style="left:785px;width:160px">是</div>
<div class="c" style="left:945px;width:160px">test</div>
<div class="c" style="left:1105px;width:100px">test</div>
<div class="c" style="left:1205px;width:100px">2024-07-02</div>
<div class="c" style="left:1305px;width:100px">test</div>
<div class="c" style="left:1405px;width:100px">2024-07-02</div>
<div class="lk" style="left:1537.500px;top:16px"><svg viewBox="0 0 12 12"><path d="M7.600 1.200l2.200 1.600-4.600 6.700-2.700 1 .3-2.800z" fill="none" stroke="#1890ff" stroke-width=".9"/><path d="M5.500 11h5" stroke="#1890ff" stroke-width=".9"/></svg>修改处理人</div>
<div class="lk" style="left:1623px;top:16px"><svg viewBox="0 0 12 12"><path d="M.5 6C2 3.600 4 2.600 6 2.600S10 3.600 11.500 6C10 8.400 8 9.400 6 9.400S2 8.400.5 6z" fill="none" stroke="#1890ff" stroke-width=".9"/><circle cx="6" cy="6" r="1.800" fill="none" stroke="#1890ff" stroke-width=".9"/></svg>查看</div>
<div class="lk" style="left:1578.500px;top:44px">复制</div>
</div>
<div class="abs" style="left:1905px;top:0;width:15px;height:945px;background:#fdfdfd;z-index:40"></div>
<div class="abs" style="left:1908px;top:18px;width:9px;height:752px;border-radius:4.500px;background:#8b8b8b;z-index:41"></div>
<svg class="abs" style="left:1908px;top:5px;width:9px;height:7px;z-index:41" viewBox="0 0 9 7"><path d="M4.500.300L8.800 6.500H.2z" fill="#8b8b8b" stroke="#8b8b8b" stroke-width=".6" stroke-linejoin="round"/></svg>
<svg class="abs" style="left:1908px;top:934px;width:9px;height:7px;z-index:41" viewBox="0 0 9 7"><path d="M4.500 6.700L8.800.5H.2z" fill="#8b8b8b" stroke="#8b8b8b" stroke-width=".6" stroke-linejoin="round"/></svg>
</body></html>
